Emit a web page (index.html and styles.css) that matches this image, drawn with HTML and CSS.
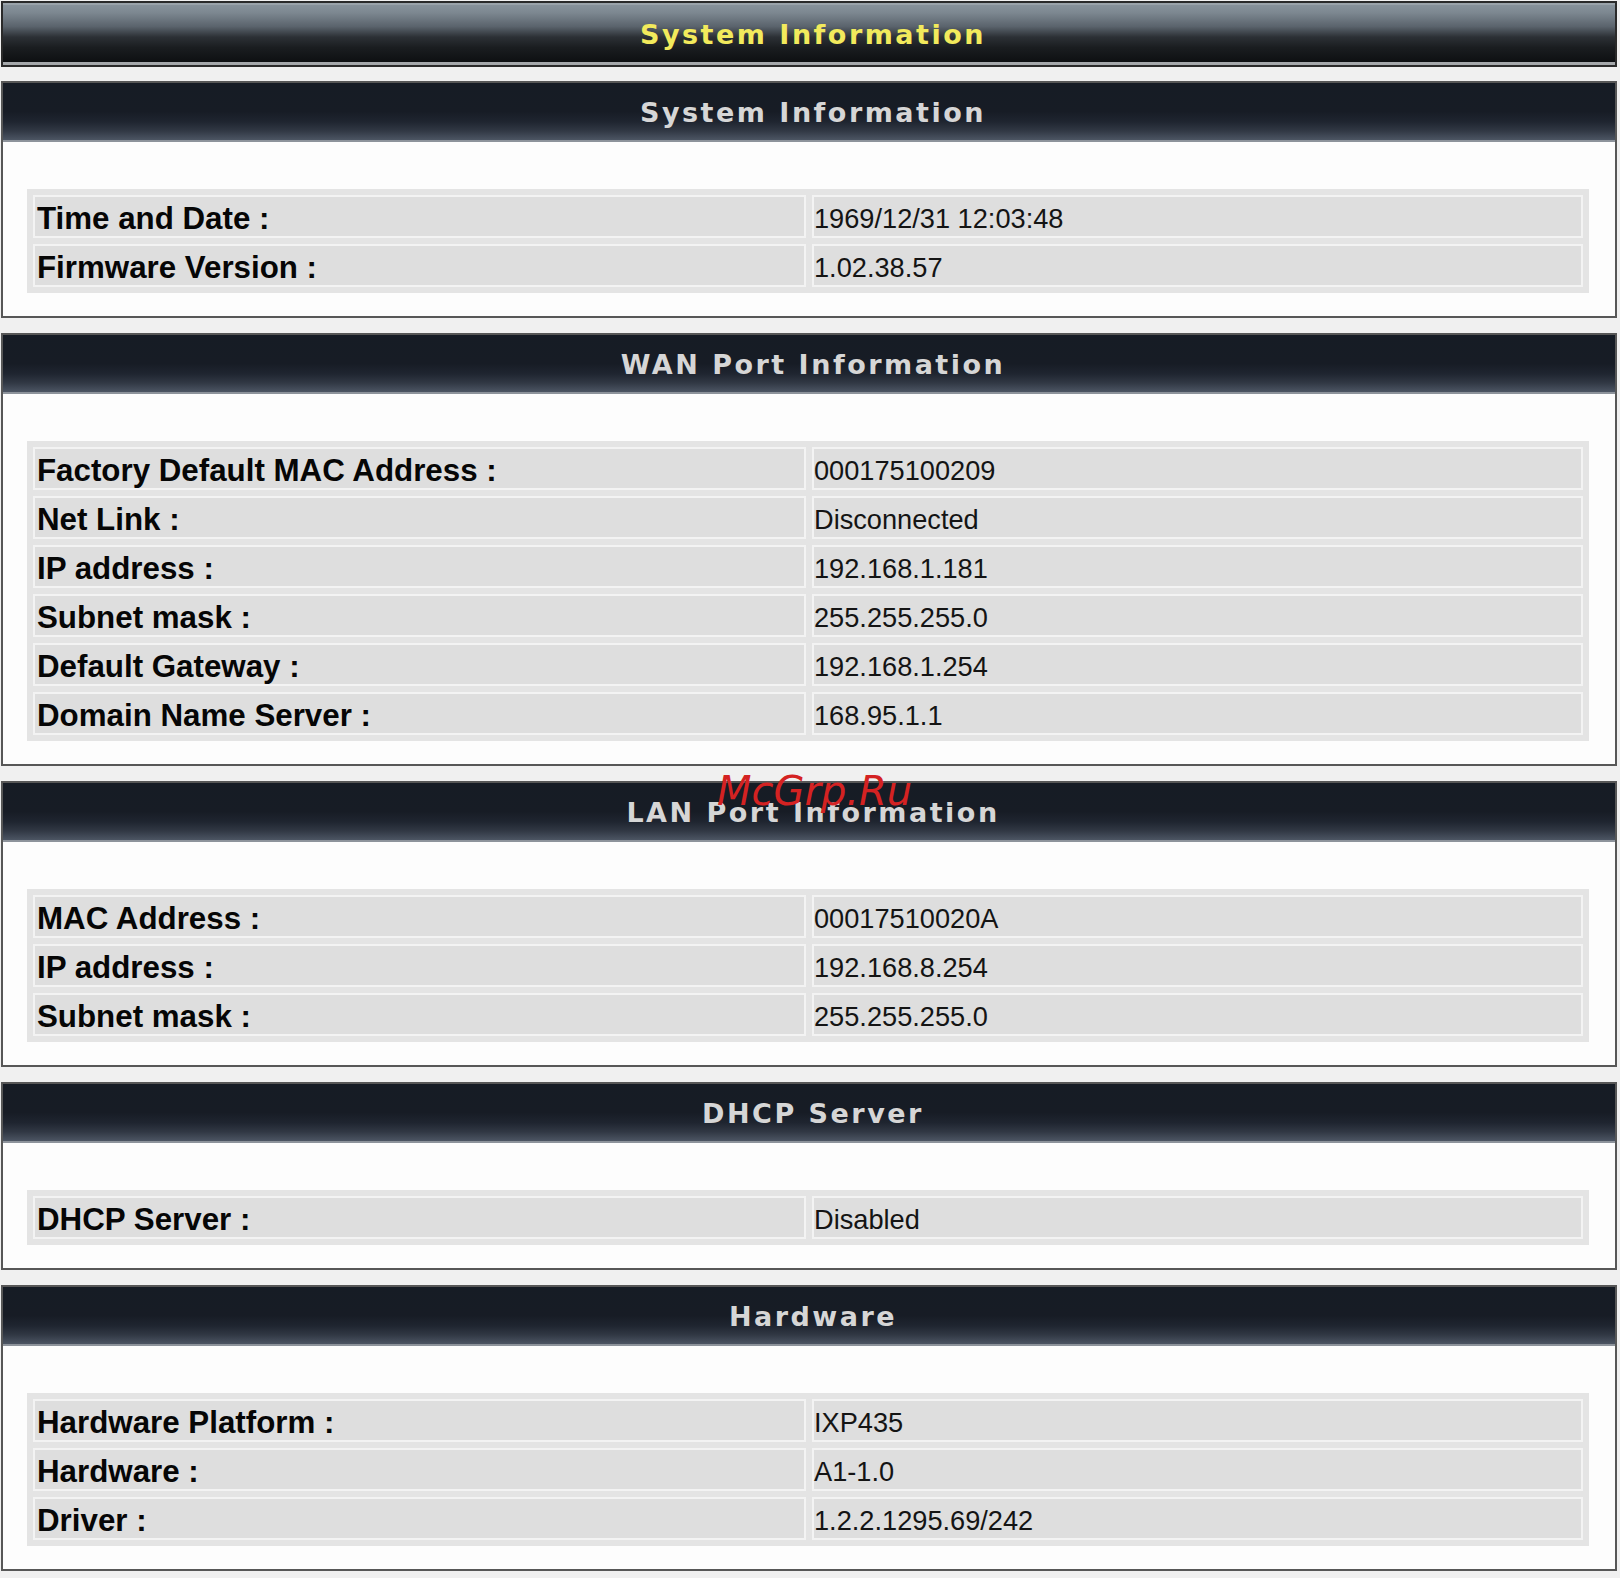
FILE: index.html
```html
<!DOCTYPE html>
<html>
<head>
<meta charset="utf-8">
<title>System Information</title>
<link rel="stylesheet" href="styles.css">
</head>
<body>
<div class="page">
  <div class="topbar"><span class="topbar-title">System Information</span></div>

  <section class="panel">
    <div class="panel-head">System Information</div>
    <div class="panel-body">
      <table class="info">
        <colgroup><col class="ck"><col></colgroup>
        <tr><td class="k">Time and Date :</td><td class="v">1969/12/31 12:03:48</td></tr>
        <tr><td class="k">Firmware Version :</td><td class="v">1.02.38.57</td></tr>
      </table>
    </div>
  </section>

  <section class="panel">
    <div class="panel-head">WAN Port Information</div>
    <div class="panel-body">
      <table class="info">
        <colgroup><col class="ck"><col></colgroup>
        <tr><td class="k">Factory Default MAC Address :</td><td class="v">000175100209</td></tr>
        <tr><td class="k">Net Link :</td><td class="v">Disconnected</td></tr>
        <tr><td class="k">IP address :</td><td class="v">192.168.1.181</td></tr>
        <tr><td class="k">Subnet mask :</td><td class="v">255.255.255.0</td></tr>
        <tr><td class="k">Default Gateway :</td><td class="v">192.168.1.254</td></tr>
        <tr><td class="k">Domain Name Server :</td><td class="v">168.95.1.1</td></tr>
      </table>
    </div>
  </section>

  <section class="panel">
    <div class="panel-head">LAN Port Information</div>
    <div class="panel-body">
      <table class="info">
        <colgroup><col class="ck"><col></colgroup>
        <tr><td class="k">MAC Address :</td><td class="v">00017510020A</td></tr>
        <tr><td class="k">IP address :</td><td class="v">192.168.8.254</td></tr>
        <tr><td class="k">Subnet mask :</td><td class="v">255.255.255.0</td></tr>
      </table>
    </div>
  </section>

  <section class="panel">
    <div class="panel-head">DHCP Server</div>
    <div class="panel-body">
      <table class="info">
        <colgroup><col class="ck"><col></colgroup>
        <tr><td class="k">DHCP Server :</td><td class="v">Disabled</td></tr>
      </table>
    </div>
  </section>

  <section class="panel">
    <div class="panel-head">Hardware</div>
    <div class="panel-body">
      <table class="info">
        <colgroup><col class="ck"><col></colgroup>
        <tr><td class="k">Hardware Platform :</td><td class="v">IXP435</td></tr>
        <tr><td class="k">Hardware :</td><td class="v">A1-1.0</td></tr>
        <tr><td class="k">Driver :</td><td class="v">1.2.2.1295.69/242</td></tr>
      </table>
    </div>
  </section>

  <div class="watermark">McGrp.Ru</div>
</div>
</body>
</html>
```
FILE: styles.css
```css
html, body {
  margin: 0;
  padding: 0;
  background: #f0f0f0;
}

.page {
  position: relative;
  padding: 1px 3px 0 1px;
}

.topbar {
  box-sizing: border-box;
  height: 66px;
  border: 2px solid #2a2a2a;
  background: linear-gradient(to bottom,
    #8a959e 0%, #7c8790 16%, #5a636c 38%, #2c3035 55%,
    #1a1d20 72%, #0b0d0f 100%);
  box-shadow: inset 0 -3px 0 #a5a8ab, inset 0 2px 0 #9aa3aa;
  display: flex;
  align-items: center;
  justify-content: center;
  margin-bottom: 14px;
}

.topbar-title,
.panel-head {
  font-family: "DejaVu Sans", Verdana, sans-serif;
  font-weight: bold;
  font-size: 27px;
  letter-spacing: 2.5px;
}

.topbar-title {
  color: #f2ea5c;
  padding: 0 0 0 8px;
}

.panel {
  border: 2px solid #575757;
  background: #fdfdfd;
  margin-bottom: 15px;
}

.panel-head {
  box-sizing: border-box;
  height: 59px;
  border-bottom: 2px solid #8d939b;
  background: linear-gradient(to bottom,
    #161c25 0%, #171c25 50%, #1f2530 68%, #313844 84%, #4c5563 100%);
  color: #d6d6d6;
  display: flex;
  align-items: center;
  justify-content: center;
  padding: 2px 0 0 8px;
}

.panel-body {
  padding: 47px 26px 23px 24px;
}

.info {
  width: 100%;
  table-layout: fixed;
  border-collapse: separate;
  border-spacing: 6px;
  background: #e4e4e4;
}

.ck {
  width: 773px;
}

.info td {
  box-sizing: border-box;
  height: 43px;
  border: 2px solid #f3f3f3;
  background: #dedede;
  padding: 4px 2px 0 2px;
  line-height: 34px;
  white-space: nowrap;
  vertical-align: middle;
}

.info td.k {
  font-family: "Liberation Sans", Arial, sans-serif;
  font-weight: bold;
  font-size: 31.3px;
  color: #060606;
}

.info td.v {
  font-family: "Liberation Sans", Arial, sans-serif;
  font-size: 27.2px;
  color: #141414;
  padding-left: 0;
}

.watermark {
  position: absolute;
  left: 717px;
  top: 771px;
  font-family: "DejaVu Sans", sans-serif;
  font-style: italic;
  font-size: 40px;
  line-height: 40px;
  color: #d42222;
}
```
